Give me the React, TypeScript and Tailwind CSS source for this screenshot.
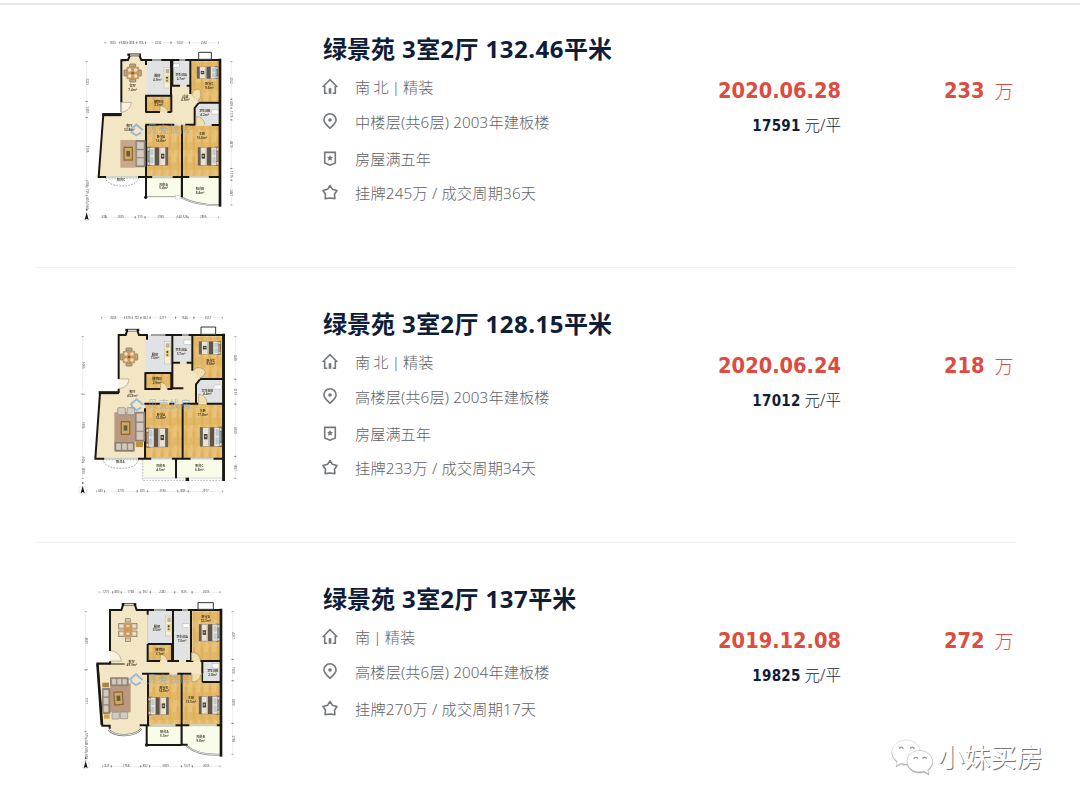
import type { ReactNode } from "react";

type RowIcon = "house" | "pin" | "badge" | "star";

interface Listing {
    id: string;
    title: string[];
    rows: { icon: RowIcon; text: string }[];
    date: string;
    unitPrice: string;
    total: string;
    plan: ReactNode;
}

const WALL = "#1b1812";
const WOOD = "url(#wood)";
const TILE = "#e1e2e4";
const FLOOR = "#f3e6c4";
const BALCONY = "#fafcea";

/* ---------- floor plan furniture ---------- */

function Bed({ x, y, flip = false, w = 64, h = 58 }: { x: number; y: number; flip?: boolean; w?: number; h?: number }) {
    return (
        <g transform={flip ? `translate(${x + w} ${y}) scale(${-w / 64} ${h / 58})` : `translate(${x} ${y}) scale(${w / 64} ${h / 58})`}>
            <rect x="0" y="0" width="12" height="58" fill="#8a6b45" />
            <circle cx="6" cy="8" r="5" fill="#c8dbe4" />
            <circle cx="6" cy="50" r="5" fill="#c8dbe4" />
            <rect x="3" y="16" width="12" height="26" fill="#8fb0c4" />
            <rect x="7" y="2" width="55" height="54" fill="#e9e2d6" stroke="#8a7a64" strokeWidth="1.5" />
            <rect x="9" y="7" width="9" height="19" rx="3" fill="#bccbd2" />
            <rect x="9" y="31" width="9" height="19" rx="3" fill="#bccbd2" />
            <rect x="22" y="2" width="13" height="54" fill="#5f5449" />
            <rect x="35" y="2" width="4" height="54" fill="#c3b6a2" />
            <rect x="54" y="2" width="8" height="54" fill="#6b5f52" />
            <rect x="41" y="21" width="10" height="15" fill="#3f4038" />
            <circle cx="46" cy="28" r="3" fill="#b8b49c" />
        </g>
    );
}

function Dining({ x, y }: { x: number; y: number }) {
    return (
        <g transform={`translate(${x} ${y})`}>
            <rect x="-9" y="-27" width="18" height="9" rx="2" fill="#c4ab87" stroke="#6b614e" strokeWidth="2" />
            <rect x="-9" y="18" width="18" height="9" rx="2" fill="#c4ab87" stroke="#6b614e" strokeWidth="2" />
            <rect x="-26" y="-9" width="9" height="18" rx="2" fill="#c4ab87" stroke="#6b614e" strokeWidth="2" />
            <rect x="17" y="-9" width="9" height="18" rx="2" fill="#c4ab87" stroke="#6b614e" strokeWidth="2" />
            <rect x="-18" y="-18" width="36" height="36" rx="3" fill="#cd9a58" stroke="#a98a5c" />
            <g fill="#ece4d2">
                <circle cx="-9" cy="-9" r="5" />
                <circle cx="9" cy="-9" r="5" />
                <circle cx="-9" cy="9" r="5" />
                <circle cx="9" cy="9" r="5" />
            </g>
            <circle r="4" fill="#785d38" />
        </g>
    );
}

function Sofa({ x, y, w, h }: { x: number; y: number; w: number; h: number }) {
    const vertical = h > w;
    return (
        <g>
            <rect x={x} y={y} width={w} height={h} rx="3" fill="#8f8276" />
            {[0, 1, 2].map((i) => (
                <rect
                    key={i}
                    x={vertical ? x + 4 : x + 5 + (i * (w - 8)) / 3}
                    y={vertical ? y + 5 + (i * (h - 8)) / 3 : y + 4}
                    width={vertical ? w - 9 : (w - 14) / 3}
                    height={vertical ? (h - 14) / 3 : h - 9}
                    rx="2"
                    fill="#d3cabd"
                    stroke="#7d7064"
                    strokeWidth="1"
                />
            ))}
        </g>
    );
}

function CoffeeTable({ x, y, w = 29, h = 42 }: { x: number; y: number; w?: number; h?: number }) {
    return (
        <g>
            <rect x={x} y={y} width={w} height={h} fill="#94692f" />
            <rect x={x + 4} y={y + 4} width={w - 8} height={h - 8} fill="#d0a964" />
            <rect x={x + 9} y={y + 13} width={w - 18} height={h - 26} fill="#655d43" />
        </g>
    );
}

function Stove({ x, y, h = 62 }: { x: number; y: number; h?: number }) {
    return (
        <g>
            <rect x={x} y={y} width="18" height={h} fill="#f3eed4" stroke="#aaa48b" />
            <rect x={x + 5} y={y + 5} width="10" height="13" fill="#b6b29f" />
            <rect x={x + 4} y={y + 24} width="11" height="22" fill="#e6d27c" />
            <circle cx={x + 9} cy={y + 31} r="3" fill="#414141" />
            <circle cx={x + 9} cy={y + 40} r="3" fill="#717171" />
        </g>
    );
}

function RoomLabel({ x, y, name, area }: { x: number; y: number; name: string; area?: string }) {
    return (
        <text x={x} y={y} textAnchor="middle" fontSize="9.5" fontWeight="600" fill="#3f3522">
            {name}
            {area && (
                <tspan x={x} dy="11">
                    {area}m²
                </tspan>
            )}
        </text>
    );
}

function Scale({ nums, from, to, at, vertical = false }: { nums: number[]; from: number; to: number; at: number; vertical?: boolean }) {
    const sum = nums.reduce((a, b) => a + b, 0);
    let pos = from;
    return (
        <g transform={vertical ? `translate(${at} 0) rotate(90)` : `translate(0 ${at})`}>
            <path d={`M${from} 0H${to}`} stroke="#c9c9c9" strokeWidth="1" />
            {nums.map((n, i) => {
                const len = ((to - from) * n) / sum;
                const start = pos;
                pos += len;
                return (
                    <g key={i}>
                        <path d={`M${start} -3V3M${start + len} -3V3`} stroke="#777" strokeWidth="2" />
                        <rect x={start + len / 2 - 9} y="-4" width="18" height="8" fill="#fff" />
                        <text x={start + len / 2} y="3" textAnchor="middle" fontSize="8.5" fill="#4a4a4a">
                            {n}
                        </text>
                    </g>
                );
            })}
        </g>
    );
}

function Compass({ x, y }: { x: number; y: number }) {
    return (
        <g transform={`translate(${x} ${y})`}>
            <circle r="12" fill="none" stroke="#bbb" strokeWidth="1" />
            <path d="M0 -13L6 10L0 6L-6 10Z" fill="#151515" />
            <path d="M-2 -21H2" stroke="#444" strokeWidth="5" />
        </g>
    );
}

function PlanMark({ x, y }: { x: number; y: number }) {
    return (
        <g opacity="0.65">
            <path d={`M${x - 20} ${y + 1}L${x} ${y - 16}L${x + 20} ${y + 1}M${x - 14} ${y}V${y + 7}L${x} ${y + 16}L${x + 14} ${y + 8}`} fill="none" stroke="#6fa4da" strokeWidth="6" />
            <text x={x + 33} y={y + 10} fontSize="30" fill="#86a8ca" letterSpacing="3">
                贝壳找房
            </text>
        </g>
    );
}

function PlanSvg({ children }: { children: ReactNode }) {
    return (
        <svg viewBox="0 0 540 600" className="h-[200px] w-[180px] shrink-0 font-['Noto_Sans','Noto_Sans_CJK_SC',sans-serif] blur-[0.5px]">
            <defs>
                <pattern id="wood" width="24" height="60" patternUnits="userSpaceOnUse">
                    <rect width="24" height="60" fill="#e3b968" />
                    <rect width="8" height="36" fill="#e9c37a" />
                    <rect x="8" y="20" width="8" height="40" fill="#dfb15e" />
                    <rect x="16" y="8" width="8" height="30" fill="#e8c074" />
                </pattern>
            </defs>
            {children}
        </svg>
    );
}

/* ---------- floor plans ---------- */

const planA = (
    <PlanSvg>
        <Scale nums={[1300, 638, 838, 766, 2232, 1607, 2562]} from={105} to={446} at={38} />
        <Scale nums={[3232, 1300, 5105, 504, 725, 600, 560]} from={95} to={540} at={50} vertical />
        <Scale nums={[3762, 899, 1175, 4870, 1175, 2487]} from={95} to={525} at={484} vertical />
        <Scale nums={[438, 2695, 910, 2935, 540, 526, 2856]} from={95} to={446} at={562} />
        <Compass x={50} y={560} />
        <path d="M155 90L172 90L180 76H208L214 90H450V440H86L100 252H155Z" fill={FLOOR} />
        <path d="M230 94H303V196H230Z" fill={TILE} />
        <path d="M307 94H359V168H307Z" fill={TILE} />
        <path d="M363 94H448V215H386L363 193Z" fill={WOOD} />
        <path d="M230 198H303V245H230Z" fill={WOOD} />
        <path d="M386 221H448V285H374V236Z" fill={TILE} />
        <path d="M230 287H333V440H230Z" fill={WOOD} />
        <path d="M337 287H448V440H337Z" fill={WOOD} />
        <path d="M227 443H333V500H227Z" fill={BALCONY} stroke="#77776e" strokeWidth="2" />
        <path d="M336 443H450V524C405 524 365 517 336 500Z" fill={BALCONY} />
        <path d="M334 502C365 519 405 526 450 526" fill="none" stroke="#8b8b8b" strokeWidth="6" />
        <path d="M334 502C365 519 405 526 450 526" fill="none" stroke="#fff" strokeWidth="2" />
        <path d="M106 444H206C200 462 178 468 156 468S112 462 106 444Z" fill="#fff" stroke="#777" strokeWidth="2" strokeDasharray="5 4" />
        <path d="M168 91H154V217M100 252L86 441M97 253H155M155 90H174L180 76H208L214 90H228V105M214 90H450V526M155 247V215M228 196V246M303 90V197M226 197H307M226 246H270M292 246H304M304 194V247M307 90V167H330M350 167H361V90M361 167V192M386 218H450M386 219L374 234V285M448 285H425M226 284H313M345 284H376M228 284V440M336 284V502M83 441H108M204 441H248M308 441H358M416 441H450M228 442V502" fill="none" stroke={WALL} strokeWidth="6" />
        <path d="M97 254H154" stroke={WALL} strokeWidth="9" />
        <path d="M450 86V530" stroke={WALL} strokeWidth="8" />
        <path d="M246 90H274M328 90H346M246 441H306M360 441H416M108 441H204" stroke="#c9cfca" strokeWidth="5" />
        <path d="M386 88V67H424V88Z" fill="#fff" stroke="#333" strokeWidth="3" />
        <path d="M172 74H213" stroke={WALL} strokeWidth="7" />
        <path d="M180 75H208" stroke="#ddd" strokeWidth="4" />
        <path d="M154 217H184C182 234 172 243 154 247" fill="#faf2df" stroke="#8d806b" strokeWidth="1.5" />
        <path d="M366 193C370 180 380 176 388 178C396 192 392 203 384 213M270 246V228C284 228 292 236 293 246M378 284V260C394 260 403 270 404 284" fill="#f3dfae" stroke="#8d806b" strokeWidth="1.5" />
        <circle cx="227" cy="502" r="5" fill={WALL} />
        <rect x="316" y="497" width="14" height="10" fill="#fff" stroke="#aaa" />
        <Dining x={188} y={129} />
        <Stove x={282} y={112} />
        <rect x="310" y="101" width="18" height="12" fill="#fff" stroke="#999" />
        <rect x="425" y="240" width="20" height="12" fill="#fff" stroke="#999" />
        <rect x="151" y="330" width="46" height="83" fill="#c4a98b" />
        <CoffeeTable x={160} y={350} />
        <Sofa x={196} y={330} w={31} h={82} />
        <Bed x={232} y={350} />
        <Bed x={382} y={350} flip />
        <Bed x={379} y={109} flip w={66} h={38} />
        <PlanMark x={199} y={300} />
        <RoomLabel x={188} y={172} name="餐厅" area="7.4" />
        <RoomLabel x={262} y={141} name="厨房" area="4.9" />
        <RoomLabel x={333} y={138} name="卫生间A" area="2.7" />
        <RoomLabel x={418} y={166} name="卧室C" area="9.6" />
        <RoomLabel x={346} y={203} name="过道" area="4.5" />
        <RoomLabel x={266} y={218} name="储物间" area="2.6" />
        <RoomLabel x={404} y={246} name="卫生间B" area="4.2" />
        <RoomLabel x={178} y={291} name="客厅" area="32.8" />
        <RoomLabel x={273} y={325} name="卧室A" area="14.8" />
        <RoomLabel x={396} y={316} name="主卧" area="16.6" />
        <RoomLabel x={281} y={467} name="阳台A" area="5.4" />
        <RoomLabel x={390} y={481} name="阳台B" area="8.4" />
        <RoomLabel x={153} y={453} name="阳台C" />
    </PlanSvg>
);

const planB = (
    <PlanSvg>
        <Scale nums={[2065, 676, 792, 822, 2277, 1646, 2557]} from={95} to={457} at={38} />
        <Scale nums={[5055, 3, 5506, 525, 1400]} from={95} to={520} at={38} vertical />
        <Scale nums={[3685, 2157, 4529, 1897]} from={95} to={520} at={496} vertical />
        <Scale nums={[665, 2770, 875, 2550, 885, 2917]} from={80} to={458} at={559} />
        <Compass x={38} y={555} />
        <path d="M146 90H165L172 76H202L207 90H460V461H76L90 264H146Z" fill={FLOOR} />
        <path d="M226 94H305V202H226Z" fill={TILE} />
        <path d="M309 94H365V172H309Z" fill={TILE} />
        <path d="M370 94H459V220H390L370 196Z" fill={WOOD} />
        <path d="M227 205H304V251H227Z" fill={WOOD} />
        <path d="M389 225H459V294H378V240Z" fill={TILE} />
        <path d="M226 297H336V459H226Z" fill={WOOD} />
        <path d="M341 297H459V459H341Z" fill={WOOD} />
        <path d="M220 461H316V518H220Z" fill={BALCONY} />
        <path d="M320 461H459V518H320Z" fill={BALCONY} />
        <path d="M218 465V526H460" fill="none" stroke="#8f8f8f" strokeWidth="2" strokeDasharray="5 4" />
        <path d="M220 519H460" stroke="#bbb" strokeWidth="2" />
        <path d="M98 464H206C200 484 178 490 152 490S104 484 98 464Z" fill="#fff" stroke="#777" strokeWidth="2" strokeDasharray="5 4" />
        <path d="M146 222V90H167L172 76H202L207 90H231V104M244 90H460V525M146 251V264M90 264L76 461M226 202V252H271M292 252H304V204H226M307 90V250H340M307 173H330M350 173H367V90M367 170V197M390 222H460M390 223L378 238V294M223 296H270M298 296H313M340 296H385M410 296H460M225 310V460M338 296V460M73 461H103M204 461H244M306 461H362M430 461H462M318 461V520" fill="none" stroke={WALL} strokeWidth="6" />
        <path d="M86 263H147" stroke={WALL} strokeWidth="9" />
        <path d="M461 86V528" stroke={WALL} strokeWidth="8" />
        <path d="M244 90H286M336 90H356M244 461H306M364 461H430M104 461H204" stroke="#c9cfca" strokeWidth="5" />
        <path d="M393 88V66H437V88Z" fill="#fff" stroke="#333" strokeWidth="3" />
        <path d="M166 75H208" stroke={WALL} strokeWidth="7" />
        <path d="M174 76H200" stroke="#ddd" strokeWidth="4" />
        <path d="M146 222H177C175 240 164 249 147 251" fill="#faf2df" stroke="#8d806b" strokeWidth="1.5" />
        <path d="M370 198C376 186 392 184 404 196C410 204 398 216 390 219M272 252V233C284 233 291 241 292 252M386 294V268C402 270 410 280 411 294" fill="#f3dfae" stroke="#8d806b" strokeWidth="1.5" />
        <rect x="347" y="518" width="10" height="10" fill={WALL} />
        <Dining x={177} y={156} />
        <Stove x={283} y={110} h={67} />
        <rect x="342" y="105" width="21" height="13" fill="#fff" stroke="#999" />
        <rect x="432" y="240" width="23" height="12" fill="#fff" stroke="#999" />
        <rect x="133" y="322" width="62" height="90" fill="#b99980" />
        <CoffeeTable x={152} y={348} />
        <Sofa x={195} y={320} w={31} h={90} />
        <Sofa x={133} y={411} w={61} h={29} />
        <rect x="143" y="308" width="23" height="21" rx="2" fill="#d2ccc2" stroke="#8d8378" strokeWidth="2" />
        <rect x="171" y="308" width="23" height="21" rx="2" fill="#d2ccc2" stroke="#8d8378" strokeWidth="2" />
        <rect x="197" y="411" width="22" height="15" fill="#be943f" />
        <Bed x={228} y={368} w={68} h={60} />
        <Bed x={388} y={365} flip w={68} h={61} />
        <Bed x={385} y={108} flip w={68} h={41} />
        <PlanMark x={200} y={299} />
        <RoomLabel x={255} y={152} name="厨房" area="7.6" />
        <RoomLabel x={333} y={139} name="卫生间A" area="3.7" />
        <RoomLabel x={422} y={170} name="卧室C" area="9.6" />
        <RoomLabel x={261} y={225} name="储物间" area="2.9" />
        <RoomLabel x={412} y={260} name="卫生间B" area="4.4" />
        <RoomLabel x={187} y={264} name="客厅" area="43.9" />
        <RoomLabel x={273} y={332} name="卧室A" area="16.6" />
        <RoomLabel x={398} y={322} name="主卧" area="17.8" />
        <RoomLabel x={272} y={487} name="阳台B" area="4.5" />
        <RoomLabel x={388} y={487} name="阳台C" area="6.8" />
        <RoomLabel x={151} y={474} name="阳台A" />
    </PlanSvg>
);

const planC = (
    <PlanSvg>
        <Scale nums={[1275, 800, 1768, 952, 2282, 1625, 2605]} from={87} to={450} at={37} />
        <Scale nums={[4801, 5, 5111, 575, 648, 500, 600]} from={95} to={540} at={47} vertical />
        <Scale nums={[4257, 1900, 3800, 2758]} from={95} to={523} at={488} vertical />
        <Scale nums={[823, 2768, 832, 3009, 1027, 2605]} from={98} to={450} at={559} />
        <Compass x={47} y={555} />
        <path d="M120 90H154L160 72H194L200 90H454V438H212C205 472 125 472 118 438H96L80 252H120Z" fill={FLOOR} />
        <path d="M234 94H306V190H234Z" fill={TILE} />
        <path d="M311 94H360V241H311Z" fill={TILE} />
        <path d="M367 94H450V241H367Z" fill={WOOD} />
        <path d="M234 195H307V241H234Z" fill={WOOD} />
        <path d="M233 284H333V434H233Z" fill={WOOD} />
        <path d="M337 284H450V434H337Z" fill={WOOD} />
        <path d="M400 244H451V304H400Z" fill={TILE} />
        <path d="M230 438H333V495H230Z" fill={BALCONY} stroke="#77776e" strokeWidth="2" />
        <path d="M337 438H452V523C410 524 370 515 350 498L337 494Z" fill={BALCONY} />
        <path d="M350 498C372 517 410 526 452 524" fill="none" stroke="#8b8b8b" strokeWidth="6" />
        <path d="M350 498C372 517 410 526 452 524" fill="none" stroke="#fff" strokeWidth="2" />
        <path d="M116 449C136 471 195 471 214 446" fill="none" stroke="#777" strokeWidth="7" />
        <path d="M116 449C136 471 195 471 214 446" fill="none" stroke="#e8e8e8" strokeWidth="3" />
        <path d="M120 213V90H154L160 72H194L200 90H233V104M200 90H454M233 192V243H270M292 243H306V192H233M309 90V243H327M348 243H370M363 90V243M83 253L97 437H119V446M120 244V250M391 243H450M397 243V281M397 306H450M216 281H298M322 281H364M234 281V436M335 281V494H353M209 436H238M316 436H358M440 436H454M230 437V495H335" fill="none" stroke={WALL} strokeWidth="6" />
        <path d="M397 281V306" stroke={WALL} strokeWidth="4" />
        <path d="M79 251H124M82 252L95 435" stroke={WALL} strokeWidth="7" />
        <path d="M124 252H164" stroke={WALL} strokeWidth="3" />
        <path d="M233 104V190" stroke="#c6c2b6" strokeWidth="2" />
        <path d="M453 86V530" stroke={WALL} strokeWidth="8" />
        <path d="M252 90H288M336 90H354M248 436H316M360 436H440" stroke="#c9cfca" strokeWidth="5" />
        <path d="M384 88V68H430V88Z" fill="#fff" stroke="#333" strokeWidth="3" />
        <path d="M155 73H199" stroke={WALL} strokeWidth="7" />
        <path d="M163 73H191" stroke="#ddd" strokeWidth="4" />
        <path d="M120 213C139 211 151 224 154 243H120" fill="#faf2df" stroke="#8d806b" strokeWidth="1.5" />
        <path d="M364 242V218C380 216 390 228 391 242M271 243V224C284 224 291 232 292 243M366 284V306C384 304 390 296 392 284" fill="#f3dfae" stroke="#8d806b" strokeWidth="1.5" />
        <circle cx="230" cy="495" r="5" fill={WALL} />
        <g stroke="#7a705d" strokeWidth="2" fill="#d8cbb4">
            <rect x="166" y="116" width="15" height="10" />
            <rect x="166" y="174" width="15" height="10" />
            <rect x="146" y="130" width="17" height="17" />
            <rect x="146" y="153" width="17" height="17" />
            <rect x="184" y="130" width="17" height="17" />
            <rect x="184" y="153" width="17" height="17" />
        </g>
        <rect x="161" y="128" width="26" height="44" fill="#cd9a58" />
        <path d="M150 138H200M150 161H200" stroke="#f4eddf" strokeWidth="5" strokeDasharray="9 10" />
        <Stove x={287} y={108} h={60} />
        <rect x="339" y="131" width="20" height="12" fill="#fff" stroke="#999" />
        <rect x="427" y="251" width="20" height="13" fill="#fff" stroke="#999" />
        <rect x="120" y="310" width="62" height="87" fill="#b99980" />
        <Sofa x={120} y={292} w={56} h={27} />
        <Sofa x={96} y={324} w={25} h={78} />
        <rect x="97" y="308" width="20" height="14" fill="#ab8542" />
        <rect x="102" y="403" width="17" height="13" fill="#d5a247" />
        <g transform="rotate(-4 145 355)">
            <CoffeeTable x={131} y={334} />
        </g>
        <rect x="126" y="397" width="22" height="20" rx="2" fill="#d2ccc2" stroke="#8d8378" strokeWidth="2" />
        <rect x="151" y="396" width="22" height="20" rx="2" fill="#d2ccc2" stroke="#8d8378" strokeWidth="2" />
        <Bed x={235} y={350} w={63} h={56} />
        <Bed x={385} y={347} flip w={64} h={57} />
        <Bed x={385} y={131} flip w={64} h={54} />
        <PlanMark x={198} y={299} />
        <RoomLabel x={261} y={143} name="厨房" area="6.5" />
        <RoomLabel x={336} y={174} name="卫生间A" area="7.0" />
        <RoomLabel x={407} y={114} name="卧室A" area="12.3" />
        <RoomLabel x={270} y={214} name="储物间" area="3.1" />
        <RoomLabel x={428} y={276} name="卫生间B" area="2.8" />
        <RoomLabel x={185} y={248} name="客厅" area="49.0" />
        <RoomLabel x={281} y={326} name="卧室B" area="14.8" />
        <RoomLabel x={363} y={357} name="主卧" area="13.5" />
        <RoomLabel x={283} y={460} name="阳台A" area="5.3" />
        <RoomLabel x={392} y={475} name="阳台B" area="9.8" />
    </PlanSvg>
);

/* ---------- listing ---------- */

const icons: Record<RowIcon, ReactNode> = {
    house: (
        <>
            <path d="M.7 9 8 1.7 15.3 9" />
            <path d="M2.7 8v7.2h2.6M13.3 8v7.2h-2.6" />
            <path d="M8 10.2v5.6" strokeWidth="2.6" />
        </>
    ),
    pin: (
        <>
            <path d="M8 15.3C4.6 12 1.9 9.8 1.9 6.9a6.1 6.1 0 0 1 12.2 0c0 2.9-2.7 5.1-6.1 8.4Z" />
            <circle cx="8" cy="7" r="1.8" fill="currentColor" stroke="none" />
        </>
    ),
    badge: (
        <>
            <path d="M2.7 2.4h10.6v10.5L8 15.2l-5.3-2.3Z" />
            <path d="m8 4.9.9 1.9 2.1.3-1.5 1.5.4 2.1L8 9.7l-1.900 1 .4-2.100L5 7.100l2.100-.3Z" fill="currentColor" stroke="none" />
        </>
    ),
    star: <path d="m8 1.500 2.300 3.700 4.700 1.300-2.500 3.700.4 4.400L8 14l-4.900.6.4-4.400L1 6.500l4.700-1.300Z" strokeLinejoin="round" />,
};

const listings: Listing[] = [
    {
        id: "132",
        title: ["绿景苑", "3", "室", "2", "厅", "132.46", "平米"],
        rows: [
            { icon: "house", text: "南 北 | 精装" },
            { icon: "pin", text: "中楼层(共6层) 2003年建板楼" },
            { icon: "badge", text: "房屋满五年" },
            { icon: "star", text: "挂牌245万 / 成交周期36天" },
        ],
        date: "2020.06.28",
        unitPrice: "17591",
        total: "233",
        plan: planA,
    },
    {
        id: "128",
        title: ["绿景苑", "3", "室", "2", "厅", "128.15", "平米"],
        rows: [
            { icon: "house", text: "南 北 | 精装" },
            { icon: "pin", text: "高楼层(共6层) 2003年建板楼" },
            { icon: "badge", text: "房屋满五年" },
            { icon: "star", text: "挂牌233万 / 成交周期34天" },
        ],
        date: "2020.06.24",
        unitPrice: "17012",
        total: "218",
        plan: planB,
    },
    {
        id: "137",
        title: ["绿景苑", "3", "室", "2", "厅", "137", "平米"],
        rows: [
            { icon: "house", text: "南 | 精装" },
            { icon: "pin", text: "高楼层(共6层) 2004年建板楼" },
            { icon: "star", text: "挂牌270万 / 成交周期17天" },
        ],
        date: "2019.12.08",
        unitPrice: "19825",
        total: "272",
        plan: planC,
    },
];

// the third row sits slightly lower than an even rhythm would put it
const rowHeights = ["h-[34px]", "h-9", "h-[38px]", "h-[30px]"];

const rowTracking: Record<RowIcon, string> = {
    house: "[word-spacing:-0.8px]",
    pin: "tracking-[0.13px]",
    badge: "",
    star: "tracking-[0.2px]",
};

function ListingCard({ item, last }: { item: Listing; last: boolean }) {
    const [name, rooms, roomUnit, halls, hallUnit, size, sizeUnit] = item.title;
    return (
        <li className={`mx-[35px] mb-3 flex h-[263px] w-[981px] border-b pl-[35px] pt-[25px] ${last ? "border-transparent" : "border-[#f3f3f3]"}`}>
            {item.plan}
            <div className="ml-[72px] w-[340px] shrink-0">
                <h2 className="mt-px h-[35px] whitespace-nowrap pl-px text-[24px] font-bold leading-[35px] text-[#101d37] [word-spacing:0.8px]">
                    {name} <span className="tracking-[0.5px]">{rooms}</span>
                    {roomUnit}
                    <span className="tracking-[0.5px]">{halls}</span>
                    {hallUnit} <span className="tracking-[0.5px]">{size}</span>
                    {sizeUnit}
                </h2>
                <ul className="pt-1">
                    {item.rows.map((row, i) => (
                        <li key={row.icon} className={`flex items-center text-[#5f6266] ${rowHeights[i]}`}>
                            <svg
                                viewBox="0 0 16 16"
                                fill="none"
                                stroke="currentColor"
                                strokeWidth="1.6"
                                className={`size-4 shrink-0 text-[#74777b] ${row.icon === "star" ? "mb-0.5" : "mb-[3px]"}`}
                            >
                                {icons[row.icon]}
                            </svg>
                            <span className={`ml-[17px] whitespace-nowrap text-[15.2px] font-light leading-6 ${rowTracking[row.icon]}`}>{row.text}</span>
                        </li>
                    ))}
                </ul>
            </div>
            <div className="mt-[46px] w-[179px] shrink-0 text-right">
                <p className="font-['DejaVu_Sans_Condensed','DejaVu_Sans',sans-serif] text-[21.6px] font-bold leading-[30px] text-[#dc4c40]">{item.date}</p>
                <p className="mt-1.5 text-[15px] leading-[26px] text-[#101d37]">
                    <span className="font-['DejaVu_Sans_Condensed','DejaVu_Sans',sans-serif] font-bold tracking-[0.3px]">{item.unitPrice}</span>{" "}
                    <span className="text-[15.5px] font-light">元/平</span>
                </p>
            </div>
            <div className="mt-[46px] flex h-[30px] items-center pl-[103px] text-[#dc4c40]">
                <span className="font-['DejaVu_Sans_Condensed','DejaVu_Sans',sans-serif] text-[21.6px] font-bold">{item.total}</span>
                <span className="ml-2.5 pt-0.5 text-[19px] font-light">万</span>
            </div>
        </li>
    );
}

function AccountMark() {
    return (
        <div className="absolute left-[890px] top-[737px] flex items-center">
            <svg viewBox="0 0 44 40" className="h-10 w-11 drop-shadow-[0.5px_1px_0.5px_#aaa]">
                <path d="M16 3C8 3 2 8.300 2 15c0 4 2 7.300 5.300 9.400L6 29l5-2.800c1.600.5 3.300.8 5 .8 8 0 14-5.300 14-12S24 3 16 3Z" fill="#fff" stroke="#c9c9c9" strokeWidth=".5" />
                <path d="M29.500 13.500C22.500 13.500 17 18.300 17 24.300S22.500 35 29.500 35c1.500 0 3-.2 4.300-.7L39 37l-1.300-4.200c3-2 4.800-5 4.800-8.500 0-6-6-10.800-13-10.800Z" fill="#fff" stroke="#b5b5b5" strokeWidth=".6" />
                <g fill="none" stroke="#999" strokeWidth="1.200">
                    <path d="M9.500 12a1.800 1.800 0 0 1 3.600 0M20.500 12a1.800 1.800 0 0 1 3.600 0M24 22a1.700 1.700 0 0 1 3.400 0M33 22a1.700 1.700 0 0 1 3.400 0" />
                </g>
            </svg>
            <span className="ml-1 whitespace-nowrap text-[26.2px] leading-10 text-white [text-shadow:1px_1px_0.5px_#777]">小妹买房</span>
        </div>
    );
}

export default function App() {
    return (
        <main className="relative h-[805px] w-[1080px] overflow-hidden bg-white font-['Noto_Sans','Noto_Sans_CJK_SC',sans-serif]">
            <div className="h-[5px] border-b-2 border-[#e4e9eb]" />
            <ul>
                {listings.map((item, i) => (
                    <ListingCard key={item.id} item={item} last={i === listings.length - 1} />
                ))}
            </ul>
            <AccountMark />
        </main>
    );
}
